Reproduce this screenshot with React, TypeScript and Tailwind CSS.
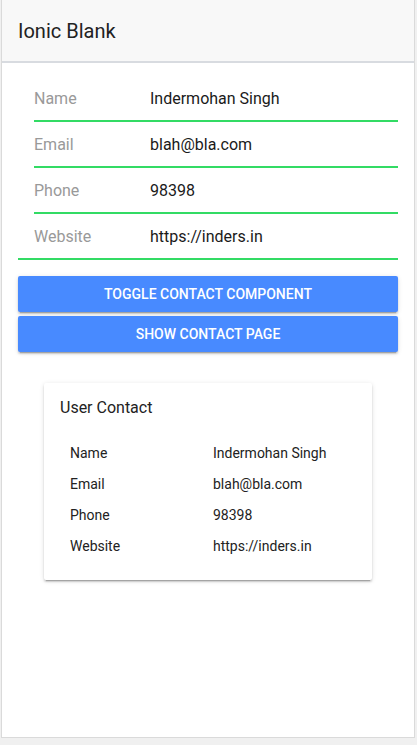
const FIELDS = [
  { label: "Name", value: "Indermohan Singh" },
  { label: "Email", value: "blah@bla.com" },
  { label: "Phone", value: "98398" },
  { label: "Website", value: "https://inders.in" },
];

const btnShadow =
  "shadow-[0_2px_2px_0_rgba(0,0,0,0.14),0_3px_1px_-2px_rgba(0,0,0,0.2),0_1px_5px_0_rgba(0,0,0,0.12)]";

export default function App() {
  return (
    <div
      className="h-[745px] w-[417px] bg-[#f0f0f0]"
      style={{ fontFamily: "Roboto, 'Noto Sans', sans-serif" }}
    >
      <div className="ml-[1px] flex h-[738px] w-[414px] flex-col border-x border-b border-[#dadada] bg-white">
        {/* toolbar */}
        <header className="flex h-[63px] shrink-0 items-center border-b-2 border-[#d8dbe0] bg-[#f8f8f8] pl-[16px]">
          <h1 className="text-[20px] font-normal text-[#222222]">Ionic Blank</h1>
        </header>

        <main className="px-[16px] pt-[13px]">
          {/* form list */}
          <div>
            {FIELDS.map((f, i) => (
              <div
                key={f.label}
                className={
                  i === FIELDS.length - 1
                    ? "flex h-[46px] items-center border-b-2 border-[#32db64] pl-[16px]"
                    : "ml-[16px] flex h-[46px] items-center border-b-2 border-[#32db64]"
                }
              >
                <span className="w-[116px] pt-[1px] text-[16px] text-[#999999]">{f.label}</span>
                <span className="pt-[1px] text-[16px] text-[#1a1a1a]">{f.value}</span>
              </div>
            ))}
          </div>

          {/* buttons */}
          <div className="mt-[16px] flex flex-col gap-[4px]">
            <button
              className={`h-[36px] w-full rounded-[2px] bg-[#488aff] text-[14px] font-medium uppercase text-white ${btnShadow}`}
            >
              Toggle Contact Component
            </button>
            <button
              className={`h-[36px] w-full rounded-[2px] bg-[#488aff] text-[14px] font-medium uppercase text-white ${btnShadow}`}
            >
              Show Contact Page
            </button>
          </div>

          {/* contact card */}
          <div
            className={`mx-auto mt-[31px] w-[328px] rounded-[2px] bg-white pb-[18px] pl-[16px] pt-[14px] ${btnShadow}`}
          >
            <h2 className="text-[16px] leading-[22px] text-[#222222]">User Contact</h2>
            <div className="mt-[19px] ml-[10px] grid grid-cols-[143px_1fr] text-[14px] text-[#222222]">
              {FIELDS.map((f) => (
                <div key={f.label} className="contents">
                  <span className="leading-[31px]">{f.label}</span>
                  <span className="leading-[31px]">{f.value}</span>
                </div>
              ))}
            </div>
          </div>
        </main>
      </div>
    </div>
  );
}
